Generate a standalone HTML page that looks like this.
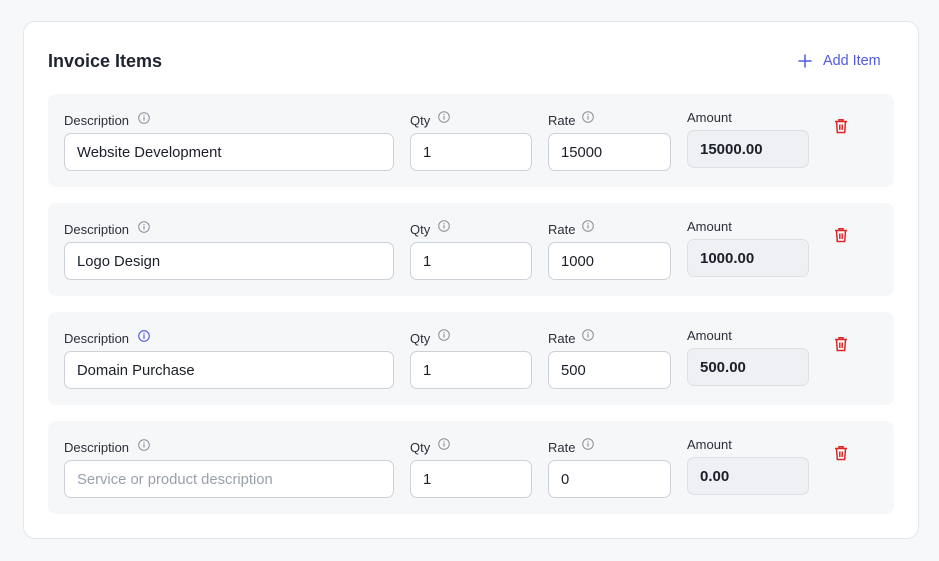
<!DOCTYPE html>
<html><head><meta charset="utf-8"><style>
*{box-sizing:border-box;margin:0;padding:0}
body{width:939px;height:561px;background:#f7f8fa;font-family:"Liberation Sans",sans-serif;position:relative;overflow:hidden;color:#111827}
.card{position:absolute;left:23px;top:21px;width:896px;height:518px;background:#fff;border:1px solid #e3e5ea;border-radius:12px}
h2{position:absolute;left:48px;top:51px;font-size:18px;font-weight:bold;color:#1f2430}
.add{position:absolute;left:798px;top:53px;color:#4f5ae0;font-size:14.4px}
.add svg{position:absolute;left:0;top:1px}
.add span{position:absolute;left:25px;top:0;white-space:nowrap}
.row{position:absolute;left:48px;width:846px;height:93px;background:#f6f7f9;border-radius:8px}
.lbl{position:absolute;font-size:13px;color:#2b2f38;white-space:nowrap}
.ic{position:absolute;width:12px;height:12px}
.in{position:absolute;top:39px;height:38px;background:#fff;border:1px solid #cdd1d8;border-radius:7px;font-size:14.8px;padding:0 12px;line-height:38px;color:#1b1f27}
.ph{color:#9aa0aa}
.amt{position:absolute;left:639px;top:36px;width:122px;height:38px;background:#eff0f3;border:1px solid #dde0e5;border-radius:7px;font-size:15px;font-weight:bold;padding:0 12px;line-height:38px;color:#1b1f27}
.tr{position:absolute;left:786px;top:24px}
</style></head><body>
<div class="card"></div>
<h2>Invoice Items</h2>
<div class="add"><svg width="14" height="14" viewBox="0 0 14 14"><path d="M7 1v12M1 7h12" stroke="#4f5ae0" stroke-width="1.5" stroke-linecap="round"/></svg><span>Add Item</span></div>

<div class="row" style="top:94px">
<div class="lbl" style="left:16px;top:19px">Description</div>
<svg class="ic" style="left:90px;top:18px" viewBox="0 0 12 12"><circle cx="6" cy="6" r="5.3" fill="none" stroke="#8b9099" stroke-width="1"/><path d="M6 5.3v3M6 3.4v.3" stroke="#8b9099" stroke-width="1.1" stroke-linecap="round"/></svg>
<div class="in" style="left:16px;width:330px">Website Development</div>
<div class="lbl" style="left:362px;top:19px">Qty</div>
<svg class="ic" style="left:390px;top:17px" viewBox="0 0 12 12"><circle cx="6" cy="6" r="5.3" fill="none" stroke="#8b9099" stroke-width="1"/><path d="M6 5.3v3M6 3.4v.3" stroke="#8b9099" stroke-width="1.1" stroke-linecap="round"/></svg>
<div class="in" style="left:362px;width:122px">1</div>
<div class="lbl" style="left:500px;top:19px">Rate</div>
<svg class="ic" style="left:534px;top:17px" viewBox="0 0 12 12"><circle cx="6" cy="6" r="5.3" fill="none" stroke="#8b9099" stroke-width="1"/><path d="M6 5.3v3M6 3.4v.3" stroke="#8b9099" stroke-width="1.1" stroke-linecap="round"/></svg>
<div class="in" style="left:500px;width:123px">15000</div>
<div class="lbl" style="left:639px;top:16px">Amount</div>
<div class="amt">15000.00</div>
<svg class="tr" width="14" height="16" viewBox="0 0 14 16"><path d="M1 3.5h12M5 3.5V1.8h4v1.7M2.5 3.5l.8 11h7.4l.8-11M5.8 6.5v5.5M8.2 6.5v5.5" fill="none" stroke="#dc2626" stroke-width="1.5"/></svg>
</div>

<div class="row" style="top:203px">
<div class="lbl" style="left:16px;top:19px">Description</div>
<svg class="ic" style="left:90px;top:18px" viewBox="0 0 12 12"><circle cx="6" cy="6" r="5.3" fill="none" stroke="#8b9099" stroke-width="1"/><path d="M6 5.3v3M6 3.4v.3" stroke="#8b9099" stroke-width="1.1" stroke-linecap="round"/></svg>
<div class="in" style="left:16px;width:330px">Logo Design</div>
<div class="lbl" style="left:362px;top:19px">Qty</div>
<svg class="ic" style="left:390px;top:17px" viewBox="0 0 12 12"><circle cx="6" cy="6" r="5.3" fill="none" stroke="#8b9099" stroke-width="1"/><path d="M6 5.3v3M6 3.4v.3" stroke="#8b9099" stroke-width="1.1" stroke-linecap="round"/></svg>
<div class="in" style="left:362px;width:122px">1</div>
<div class="lbl" style="left:500px;top:19px">Rate</div>
<svg class="ic" style="left:534px;top:17px" viewBox="0 0 12 12"><circle cx="6" cy="6" r="5.3" fill="none" stroke="#8b9099" stroke-width="1"/><path d="M6 5.3v3M6 3.4v.3" stroke="#8b9099" stroke-width="1.1" stroke-linecap="round"/></svg>
<div class="in" style="left:500px;width:123px">1000</div>
<div class="lbl" style="left:639px;top:16px">Amount</div>
<div class="amt">1000.00</div>
<svg class="tr" width="14" height="16" viewBox="0 0 14 16"><path d="M1 3.5h12M5 3.5V1.8h4v1.7M2.5 3.5l.8 11h7.4l.8-11M5.8 6.5v5.5M8.2 6.5v5.5" fill="none" stroke="#dc2626" stroke-width="1.5"/></svg>
</div>

<div class="row" style="top:312px">
<div class="lbl" style="left:16px;top:19px">Description</div>
<svg class="ic" style="left:90px;top:18px" viewBox="0 0 12 12"><circle cx="6" cy="6" r="5.3" fill="none" stroke="#4f5ae0" stroke-width="1.1"/><path d="M6 5.3v3M6 3.4v.3" stroke="#4f5ae0" stroke-width="1.2" stroke-linecap="round"/></svg>
<div class="in" style="left:16px;width:330px">Domain Purchase</div>
<div class="lbl" style="left:362px;top:19px">Qty</div>
<svg class="ic" style="left:390px;top:17px" viewBox="0 0 12 12"><circle cx="6" cy="6" r="5.3" fill="none" stroke="#8b9099" stroke-width="1"/><path d="M6 5.3v3M6 3.4v.3" stroke="#8b9099" stroke-width="1.1" stroke-linecap="round"/></svg>
<div class="in" style="left:362px;width:122px">1</div>
<div class="lbl" style="left:500px;top:19px">Rate</div>
<svg class="ic" style="left:534px;top:17px" viewBox="0 0 12 12"><circle cx="6" cy="6" r="5.3" fill="none" stroke="#8b9099" stroke-width="1"/><path d="M6 5.3v3M6 3.4v.3" stroke="#8b9099" stroke-width="1.1" stroke-linecap="round"/></svg>
<div class="in" style="left:500px;width:123px">500</div>
<div class="lbl" style="left:639px;top:16px">Amount</div>
<div class="amt">500.00</div>
<svg class="tr" width="14" height="16" viewBox="0 0 14 16"><path d="M1 3.5h12M5 3.5V1.8h4v1.7M2.5 3.5l.8 11h7.4l.8-11M5.8 6.5v5.5M8.2 6.5v5.5" fill="none" stroke="#dc2626" stroke-width="1.5"/></svg>
</div>

<div class="row" style="top:421px">
<div class="lbl" style="left:16px;top:19px">Description</div>
<svg class="ic" style="left:90px;top:18px" viewBox="0 0 12 12"><circle cx="6" cy="6" r="5.3" fill="none" stroke="#8b9099" stroke-width="1"/><path d="M6 5.3v3M6 3.4v.3" stroke="#8b9099" stroke-width="1.1" stroke-linecap="round"/></svg>
<div class="in ph" style="left:16px;width:330px">Service or product description</div>
<div class="lbl" style="left:362px;top:19px">Qty</div>
<svg class="ic" style="left:390px;top:17px" viewBox="0 0 12 12"><circle cx="6" cy="6" r="5.3" fill="none" stroke="#8b9099" stroke-width="1"/><path d="M6 5.3v3M6 3.4v.3" stroke="#8b9099" stroke-width="1.1" stroke-linecap="round"/></svg>
<div class="in" style="left:362px;width:122px">1</div>
<div class="lbl" style="left:500px;top:19px">Rate</div>
<svg class="ic" style="left:534px;top:17px" viewBox="0 0 12 12"><circle cx="6" cy="6" r="5.3" fill="none" stroke="#8b9099" stroke-width="1"/><path d="M6 5.3v3M6 3.4v.3" stroke="#8b9099" stroke-width="1.1" stroke-linecap="round"/></svg>
<div class="in" style="left:500px;width:123px">0</div>
<div class="lbl" style="left:639px;top:16px">Amount</div>
<div class="amt">0.00</div>
<svg class="tr" width="14" height="16" viewBox="0 0 14 16"><path d="M1 3.5h12M5 3.5V1.8h4v1.7M2.5 3.5l.8 11h7.4l.8-11M5.8 6.5v5.5M8.2 6.5v5.5" fill="none" stroke="#dc2626" stroke-width="1.5"/></svg>
</div>
</body></html>
